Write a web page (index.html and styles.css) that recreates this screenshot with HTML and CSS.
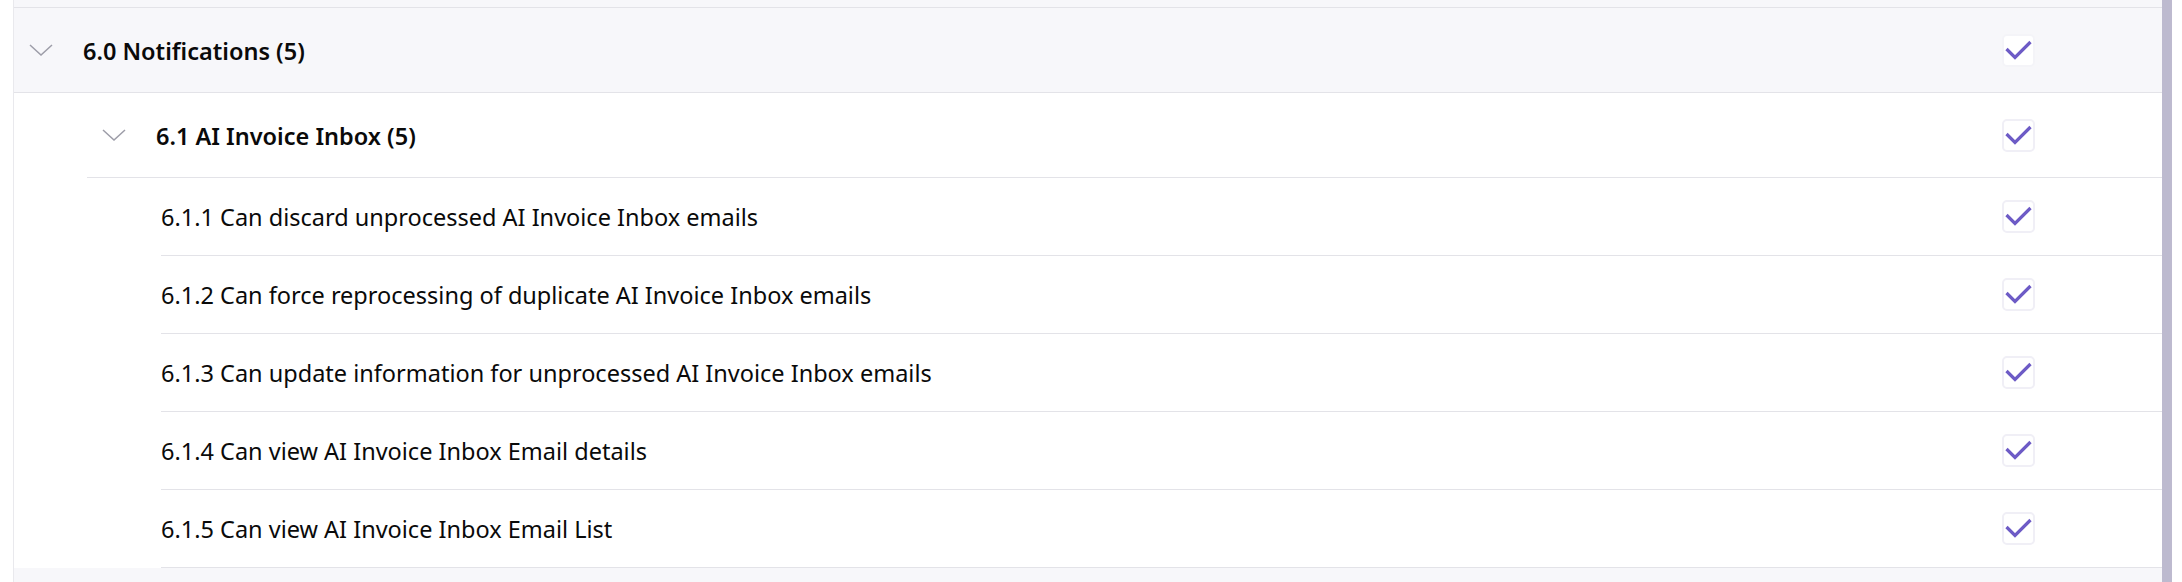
FILE: index.html
```html
<!DOCTYPE html>
<html>
<head>
<meta charset="utf-8">
<link rel="stylesheet" href="styles.css">
</head>
<body>
<div class="page">
  <div class="table">
    <div class="prev"></div>
    <div class="row section">
      <div class="label">
        <svg class="chev" width="24" height="12" viewBox="0 0 24 12"><polyline points="1,1 12,11 23,1" fill="none" stroke="#9d9da8" stroke-width="1.5"/></svg>
        <span class="title">6.0 Notifications (5)</span>
      </div>
      <div class="cell"><span class="box"><svg width="29" height="29" viewBox="0 0 29 29"><polyline points="2.5,13 11,21.5 26.5,6" fill="none" stroke="#6d5bc6" stroke-width="3.2"/></svg></span></div>
    </div>
    <div class="group">
      <div class="row sub">
        <div class="label">
          <svg class="chev" width="24" height="12" viewBox="0 0 24 12"><polyline points="1,1 12,11 23,1" fill="none" stroke="#9d9da8" stroke-width="1.5"/></svg>
          <span class="title">6.1 AI Invoice Inbox (5)</span>
        </div>
        <div class="cell"><span class="box"><svg width="29" height="29" viewBox="0 0 29 29"><polyline points="2.5,13 11,21.5 26.5,6" fill="none" stroke="#6d5bc6" stroke-width="3.2"/></svg></span></div>
      </div>
      <div class="items">
        <div class="row item">
          <div class="label">6.1.1 Can discard unprocessed AI Invoice Inbox emails</div>
          <div class="cell"><span class="box"><svg width="29" height="29" viewBox="0 0 29 29"><polyline points="2.5,13 11,21.5 26.5,6" fill="none" stroke="#6d5bc6" stroke-width="3.2"/></svg></span></div>
        </div>
        <div class="row item">
          <div class="label">6.1.2 Can force reprocessing of duplicate AI Invoice Inbox emails</div>
          <div class="cell"><span class="box"><svg width="29" height="29" viewBox="0 0 29 29"><polyline points="2.5,13 11,21.5 26.5,6" fill="none" stroke="#6d5bc6" stroke-width="3.2"/></svg></span></div>
        </div>
        <div class="row item">
          <div class="label">6.1.3 Can update information for unprocessed AI Invoice Inbox emails</div>
          <div class="cell"><span class="box"><svg width="29" height="29" viewBox="0 0 29 29"><polyline points="2.5,13 11,21.5 26.5,6" fill="none" stroke="#6d5bc6" stroke-width="3.2"/></svg></span></div>
        </div>
        <div class="row item">
          <div class="label">6.1.4 Can view AI Invoice Inbox Email details</div>
          <div class="cell"><span class="box"><svg width="29" height="29" viewBox="0 0 29 29"><polyline points="2.5,13 11,21.5 26.5,6" fill="none" stroke="#6d5bc6" stroke-width="3.2"/></svg></span></div>
        </div>
        <div class="row item">
          <div class="label">6.1.5 Can view AI Invoice Inbox Email List</div>
          <div class="cell"><span class="box"><svg width="29" height="29" viewBox="0 0 29 29"><polyline points="2.5,13 11,21.5 26.5,6" fill="none" stroke="#6d5bc6" stroke-width="3.2"/></svg></span></div>
        </div>
      </div>
    </div>
    <div class="next"></div>
  </div>
  <div class="scrollbar"></div>
</div>
</body>
</html>
```

FILE: styles.css
```css
html, body {
  margin: 0;
  padding: 0;
  background: #ffffff;
}
body {
  font-family: "Noto Sans", "Open Sans", sans-serif;
  color: #0a0a0a;
}
.page {
  display: flex;
  height: 582px;
  padding-left: 13px;
  padding-right: 10px;
  overflow: hidden;
}
.table {
  flex: 1;
  display: flex;
  flex-direction: column;
  border-left: 1px solid #e9e9ed;
  min-width: 0;
}
.scrollbar {
  width: 10px;
  background: #bdbacf;
}
.prev {
  height: 7px;
  background: #f7f7fa;
  border-bottom: 1px solid #e3e3e8;
  flex: none;
}
.next {
  flex: 1;
  background: #f7f7fa;
}
.row {
  display: flex;
  align-items: center;
  border-bottom: 1px solid #e3e3e8;
  flex: none;
}
.label {
  flex: 1;
  display: flex;
  align-items: center;
  font-size: 23.5px;
  white-space: nowrap;
}
.section {
  height: 84px;
  background: #f7f7fa;
  padding-left: 15px;
}
.section .label,
.sub .label {
  padding-top: 2px;
}
.group {
  margin-left: 73px;
}
.sub {
  height: 84px;
  padding-left: 15px;
}
.chev {
  flex: none;
  display: block;
  margin-right: 30px;
  margin-top: -3px;
}
.title {
  font-weight: 600;
  font-size: 23.5px;
}
.items {
  margin-left: 74px;
}
.item {
  height: 77px;
}
.item .label {
  padding-top: 1px;
}
.cell {
  width: 288px;
  flex: none;
  display: flex;
  justify-content: center;
  align-items: center;
}
.box {
  width: 29px;
  height: 29px;
  border: 2px solid #f0eff6;
  border-radius: 5px;
  background: #ffffff;
  display: block;
}
.section .box {
  border-color: #f4f4f8;
}
.box svg {
  display: block;
}
```
